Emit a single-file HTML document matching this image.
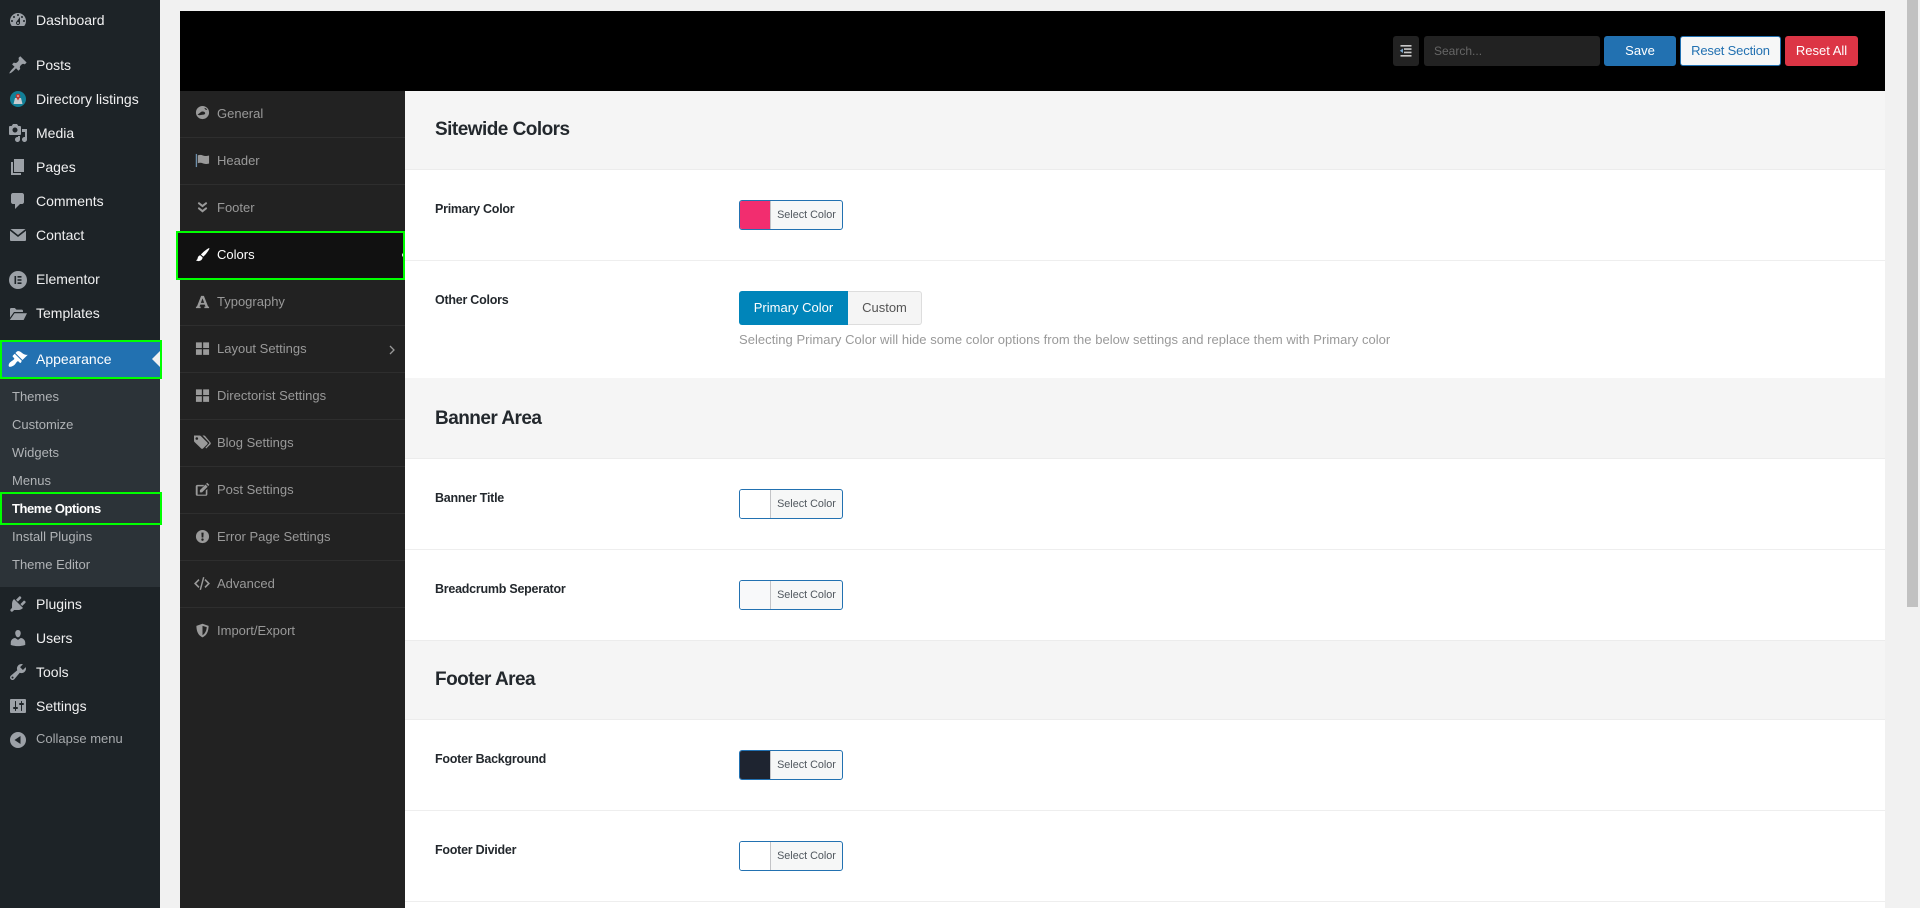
<!DOCTYPE html>
<html lang="en"><head><meta charset="utf-8"><title>Theme Options</title>
<style>
html,body{margin:0;padding:0;width:1920px;height:908px;overflow:hidden;background:#f1f1f1;font-family:"Liberation Sans",sans-serif}
div,span,a,svg{position:absolute;display:block;box-sizing:border-box}
.t{white-space:nowrap}
.m{left:36px;height:20px;line-height:20px;font-size:14px;color:#f0f0f1;white-space:nowrap}
.i{left:8px;width:20px;height:20px;fill:#9ca1a7}
.s{left:12px;height:18px;line-height:18px;font-size:13px;color:#b0b3b6;white-space:nowrap}
.p{left:217px;height:18px;line-height:18px;font-size:13px;color:#999;white-space:nowrap}
.pi{left:195px;width:15px;height:15px;fill:#9a9a9a}
.hr{left:180px;width:225px;height:1px;background:#2e2e2e}
.sec{left:405px;width:1480px;background:#f5f5f5;border-bottom:1px solid #ececec}
.h{left:435px;height:26px;line-height:26px;font-size:19px;font-weight:bold;color:#23282d;white-space:nowrap;letter-spacing:-.53px}
.l{left:435px;height:18px;line-height:18px;font-size:12.5px;font-weight:bold;color:#23282d;white-space:nowrap;letter-spacing:-.25px}
.line{left:405px;width:1480px;height:1px;background:#eee}
.c{left:739px;width:104px;height:30px;border:1px solid #2271b1;border-radius:3px;background:#f6f7f7;overflow:hidden}
.c i{position:absolute;display:block;left:0;top:0;width:30px;height:28px;border-right:1px solid #c3c4c7}
.c b{position:absolute;left:31px;top:0;width:71px;height:28px;line-height:28px;text-align:center;font-size:10.8px;font-weight:normal;color:#50575e;white-space:nowrap}
</style></head><body>

<!-- WP admin sidebar -->
<div style="left:0;top:0;width:160px;height:908px;background:#1d2327"></div>
<div style="left:0;top:378px;width:160px;height:209px;background:#2c3338"></div>
<div style="left:0;top:340px;width:160px;height:38px;background:#2271b1"></div>

<svg class="i" style="top:10px" viewBox="0 0 20 20"><path fill-rule="evenodd" d="M3.76 16h12.48c1.1-1.37 1.76-3.11 1.76-5 0-4.42-3.58-8-8-8s-8 3.58-8 8c0 1.89.66 3.63 1.76 5zM10 4c.55 0 1 .45 1 1s-.45 1-1 1-1-.45-1-1 .45-1 1-1zM6 6c.55 0 1 .45 1 1s-.45 1-1 1-1-.45-1-1 .45-1 1-1zm8 0c.55 0 1 .45 1 1s-.45 1-1 1-1-.45-1-1 .45-1 1-1zm-5.37 5.55L12 7v6c0 1.1-.9 2-2 2s-2-.9-2-2c0-.57.24-1.08.63-1.45zM4 10c.55 0 1 .45 1 1s-.45 1-1 1-1-.45-1-1 .45-1 1-1zm12 0c.55 0 1 .45 1 1s-.45 1-1 1-1-.45-1-1 .45-1 1-1zm-5 3c0-.55-.45-1-1-1s-1 .45-1 1 .45 1 1 1 1-.45 1-1z"/></svg>
<div class="m" style="top:10px">Dashboard</div>

<svg class="i" style="top:55px" viewBox="0 0 20 20"><path d="M10.44 3.02l1.82-1.82 6.36 6.35-1.83 1.82c-1.05-.68-2.48-.57-3.41.36l-.75.75c-.92.93-1.04 2.35-.35 3.41l-1.83 1.82-2.41-2.41-2.8 2.79c-.42.42-3.38 2.71-3.8 2.29s1.86-3.39 2.28-3.81l2.79-2.79L4.1 9.36l1.83-1.82c1.05.69 2.48.57 3.4-.36l.75-.75c.93-.92 1.05-2.35.36-3.41z"/></svg>
<div class="m" style="top:55px">Posts</div>

<svg style="left:10px;top:91px;width:16px;height:16px" viewBox="0 0 16 16"><circle cx="8" cy="8" r="8" fill="#127f97"/><path d="M5 7h6l1.500 6h-9z" fill="#c9ccd0"/><circle cx="8" cy="5" r="2.300" fill="#c5352f"/><path d="M6.300 6.500L8 9.500l1.700-3z" fill="#c5352f"/><circle cx="8" cy="5" r=".8" fill="#eee"/></svg>
<div class="m" style="top:89px">Directory listings</div>

<svg class="i" style="top:123px" viewBox="0 0 20 20"><path fill-rule="evenodd" d="M13 11V4c0-.55-.45-1-1-1h-1.67L9 1H5L3.67 3H2c-.55 0-1 .45-1 1v7c0 .55.45 1 1 1h10c.55 0 1-.45 1-1zM7 4.500c1.38 0 2.500 1.120 2.500 2.500S8.380 9.500 7 9.500 4.500 8.380 4.500 7 5.620 4.500 7 4.500zM14 6h5v10.500c0 1.380-1.120 2.500-2.500 2.500S14 17.880 14 16.500s1.120-2.500 2.500-2.500c.17 0 .34.02.5.05V9h-3V6zm-4 8.050V13h2v3.500c0 1.380-1.120 2.500-2.500 2.500S7 17.880 7 16.500 8.120 14 9.500 14c.17 0 .34.02.5.05z"/></svg>
<div class="m" style="top:123px">Media</div>

<svg class="i" style="top:157px" viewBox="0 0 20 20"><path d="M6 15V2h10v13H6zm-1 1h8v2H3V5h2v11z"/></svg>
<div class="m" style="top:157px">Pages</div>

<svg class="i" style="top:191px" viewBox="0 0 20 20"><path d="M5 2h9c1.100 0 2 .9 2 2v7c0 1.100-.9 2-2 2h-2l-5 5v-5H5c-1.100 0-2-.9-2-2V4c0-1.100.9-2 2-2z"/></svg>
<div class="m" style="top:191px">Comments</div>

<svg class="i" style="top:225px" viewBox="0 0 20 20"><path d="M2.500 4h15L10 10z"/><path d="M2 5.800l8 6.200 8-6.200V15c0 .55-.45 1-1 1H3c-.55 0-1-.45-1-1z"/></svg>
<div class="m" style="top:225px">Contact</div>

<svg class="i" style="top:270px" viewBox="0 0 20 20"><path fill-rule="evenodd" d="M10 1a9 9 0 1 0 0 18a9 9 0 1 0 0-18zM6.500 6h1.600v8H6.500zM9.500 6h4v1.600h-4zM9.500 9.200h4v1.600h-4zM9.500 12.400h4v1.600h-4z"/></svg>
<div class="m" style="top:269px">Elementor</div>

<svg class="i" style="top:304px" viewBox="0 0 20 20"><path d="M2 5.200c0-.7.5-1.200 1.200-1.200h3.600l1.600 1.600h5.400c.7 0 1.200.5 1.200 1.200v1.200H6l-4 5.600zM6.500 9.200H19l-3.400 6.800H1.800z"/></svg>
<div class="m" style="top:303px">Templates</div>

<svg class="i" style="top:349px;fill:#fff" viewBox="0 0 20 20"><path d="M14.480 11.060L7.410 3.990l1.500-1.500c.5-.56 2.300-.47 3.510.32 1.210.8 1.430 1.280 2.910 2.100 1.180.64 2.450 1.260 4.450.85zm-.71.71L6.700 4.700 4.930 6.470c-.39.39-.39 1.020 0 1.410l1.060 1.060c.39.39.39 1.030 0 1.420-.6.6-1.430 1.110-2.210 1.690-.35.26-.7.53-1.010.84C1.430 13.230 0 16.500 1.010 17.500c.99 1 4.260-.43 5.610-1.760.31-.31.58-.66.84-1.010.58-.78 1.090-1.610 1.690-2.210.39-.39 1.020-.39 1.410 0l1.060 1.060c.39.39 1.020.39 1.410 0z"/></svg>
<div class="m" style="top:349px;color:#fff">Appearance</div>
<svg style="left:152px;top:351px;width:8px;height:16px" viewBox="0 0 8 16"><path d="M8 0v16L0 8z" fill="#f1f1f1"/></svg>
<div style="left:0;top:340px;width:162px;height:39px;border:2px solid #0f0"></div>

<div class="s" style="top:388px">Themes</div>
<div class="s" style="top:416px">Customize</div>
<div class="s" style="top:444px">Widgets</div>
<div class="s" style="top:472px">Menus</div>
<div class="s" style="top:500px;color:#fff;font-weight:bold;letter-spacing:-.45px">Theme Options</div>
<div style="left:0;top:492px;width:162px;height:33px;border:2px solid #0f0"></div>
<div class="s" style="top:528px">Install Plugins</div>
<div class="s" style="top:556px">Theme Editor</div>

<svg class="i" style="top:594px" viewBox="0 0 20 20"><path d="M13.110 4.360L9.870 7.600 8 5.730l3.240-3.240c.35-.34 1.050-.2 1.560.32.52.51.66 1.210.31 1.550zm-8 1.770l.91-1.120 9.010 9.010-1.190.84c-.71.71-2.630 1.160-3.820 1.160H6.140L4.900 17.260c-.59.59-1.540.59-2.120 0-.59-.58-.59-1.530 0-2.120l1.240-1.240v-3.880c0-1.130.4-3.190 1.090-3.890zm7.260 3.970l3.240-3.240c.34-.35 1.040-.21 1.550.31.52.51.66 1.210.31 1.550l-3.240 3.250z"/></svg>
<div class="m" style="top:594px">Plugins</div>

<svg class="i" style="top:628px" viewBox="0 0 20 20"><path d="M10 9.250c-2.270 0-2.730-3.440-2.730-3.440C7 4.020 7.820 2 9.970 2c2.160 0 2.980 2.020 2.710 3.810 0 0-.41 3.440-2.680 3.440zm0 2.570L12.720 10c2.390 0 4.520 2.330 4.520 4.530v2.490s-3.650 1.130-7.240 1.130c-3.650 0-7.240-1.130-7.240-1.130v-2.490c0-2.250 1.940-4.480 4.470-4.480z"/></svg>
<div class="m" style="top:628px">Users</div>

<svg class="i" style="top:662px" viewBox="0 0 20 20"><path fill-rule="evenodd" d="M16.680 9.770c-1.340 1.340-3.300 1.670-4.950.99l-5.410 6.520c-.99.99-2.590.99-3.580 0s-.99-2.590 0-3.570l6.520-5.420c-.68-1.650-.35-3.610.99-4.950 1.280-1.280 3.120-1.620 4.720-1.060l-2.890 2.890 2.820 2.820 2.860-2.870c.53 1.580.18 3.390-1.080 4.650zM3.810 16.210c.4.39 1.040.39 1.430 0 .4-.4.4-1.040 0-1.430-.39-.4-1.030-.4-1.430 0-.39.39-.39 1.030 0 1.430z"/></svg>
<div class="m" style="top:662px">Tools</div>

<svg class="i" style="top:696px" viewBox="0 0 20 20"><path fill-rule="evenodd" d="M18 16V4c0-.55-.45-1-1-1H3c-.55 0-1 .45-1 1v12c0 .55.45 1 1 1h14c.55 0 1-.45 1-1zM8 11h1c.55 0 1 .45 1 1s-.45 1-1 1H8v1.500c0 .28-.22.5-.5.5s-.5-.22-.5-.5V13H6c-.55 0-1-.45-1-1s.45-1 1-1h1V5.500c0-.28.22-.5.5-.5s.5.22.5.5V11zm5-2h-1c-.55 0-1-.45-1-1s.45-1 1-1h1V5.500c0-.28.22-.5.5-.5s.5.22.5.5V7h1c.55 0 1 .45 1 1s-.45 1-1 1h-1v5.500c0 .28-.22.5-.5.5s-.5-.22-.5-.5V9z"/></svg>
<div class="m" style="top:696px">Settings</div>

<svg class="i" style="top:730px" viewBox="0 0 20 20"><path fill-rule="evenodd" d="M10 2a8 8 0 1 0 0 16a8 8 0 1 0 0-16zM12.500 6v8L6.500 10z"/></svg>
<div class="m" style="top:729px;font-size:13px;color:#a7aaad">Collapse menu</div>

<!-- Panel header -->
<div style="left:180px;top:11px;width:1705px;height:80px;background:#000"></div>
<div style="left:1393px;top:36px;width:26px;height:30px;background:#222;border-radius:3px"></div>
<svg style="left:1399px;top:44px;width:14px;height:14px" viewBox="0 0 14 14"><path d="M1.500 1h11v1.600h-11zM5 4.300h7.500v1.600H5zM5 7.600h7.500v1.600H5zM1.500 11h11v1.600h-11z" fill="#c8c8c8"/><path d="M4 4.500v4.500L.8 6.800z" fill="#7ba5c9"/></svg>
<div style="left:1424px;top:36px;width:176px;height:30px;background:#222;border-radius:3px"></div>
<div class="t" style="left:1434px;top:36px;height:30px;line-height:30px;font-size:12px;color:#666">Search...</div>
<div class="t" style="left:1604px;top:36px;width:72px;height:30px;line-height:30px;background:#2271b1;border-radius:3px;color:#fff;font-size:13px;text-align:center">Save</div>
<div class="t" style="left:1680px;top:36px;width:101px;height:30px;line-height:27px;background:#f6f7f7;border:1px solid #2271b1;border-radius:3px;color:#2271b1;font-size:13px;text-align:center;letter-spacing:-.17px">Reset Section</div>
<div class="t" style="left:1785px;top:36px;width:73px;height:30px;line-height:30px;background:#dc3545;border-radius:3px;color:#fff;font-size:13px;text-align:center">Reset All</div>

<!-- Panel nav -->
<div style="left:180px;top:91px;width:225px;height:817px;background:#222"></div>
<div class="hr" style="top:137px"></div><div class="hr" style="top:184px"></div><div class="hr" style="top:231px"></div><div class="hr" style="top:278px"></div><div class="hr" style="top:325px"></div><div class="hr" style="top:372px"></div><div class="hr" style="top:419px"></div><div class="hr" style="top:466px"></div><div class="hr" style="top:513px"></div><div class="hr" style="top:560px"></div><div class="hr" style="top:607px"></div>

<svg class="pi" style="top:105px" viewBox="0 0 16 16"><path fill-rule="evenodd" d="M8 1a7 7 0 1 0 0 14A7 7 0 1 0 8 1zM2.800 10c1.700-.6 2.800-2.200 4.200-2.900 1.500-.5 3.500 0 3.800 1.400.3 1.300-1.600 2-3 1.900-1.300 0-3.700 1.300-5-.4zM10 3c1 0 2.500.8 3 2-1 .5-2.500 0-3-2z"/></svg>
<div class="p" style="top:105px">General</div>

<svg class="pi" style="top:153px" viewBox="0 0 16 16"><path fill="#6d8fab" d="M.8 1h1.400v14H.8z"/><path d="M3 2.500c2-.8 3.800-.5 5.500.2s3.500.7 6.500 0v8.500c-3 .8-4.700.6-6.500-.1s-3.500-.9-5.500-.2z"/></svg>
<div class="p" style="top:152px">Header</div>

<svg class="pi" style="top:200px" viewBox="0 0 16 16"><path d="M4 2l4 3 4-3 1 1.800-5 4-5-4zM4 7.500l4 3 4-3 1 1.800-5 4-5-4z"/></svg>
<div class="p" style="top:199px">Footer</div>

<div style="left:178px;top:233px;width:227px;height:47px;background:#111"></div>
<svg class="pi" style="top:247px;fill:#fff" viewBox="0 0 16 16"><path d="M15 1c.5.3.4 1-.1 1.800C13 6 10.500 9 8.800 10.300L6.300 8C8 6 11.800 2.600 15 1zM5.500 8.800l2.600 2.300c0 2.500-2.300 3.900-4.300 3.900-1.200 0-2.300-.4-2.800-1 1.300-.2 1.600-1 1.800-2 .3-1.600 1.300-3 2.700-3.200z"/></svg>
<div class="p" style="top:246px;color:#fff">Colors</div>
<div style="left:402px;top:253px;width:3px;height:4px;background:#eee;border-radius:2px 0 0 2px"></div>
<div style="left:176px;top:231px;width:229px;height:49px;border:2px solid #0f0"></div>

<svg class="pi" style="top:294px" viewBox="0 0 16 16"><path fill-rule="evenodd" d="M6.500 2h3L14 13.500h1V15h-5v-1.500h1.200l-.8-2.200H5.600l-.8 2.200H6V15H1v-1.500h1zM8 4.700L6.200 9.500h3.600z"/></svg>
<div class="p" style="top:293px">Typography</div>

<svg class="pi" style="top:341px" viewBox="0 0 16 16"><path d="M1 1.500h6.300v6H1zM8.700 1.500H15v6H8.700zM1 8.800h6.300v6H1zM8.700 8.800H15v6H8.700z"/></svg>
<div class="p" style="top:340px">Layout Settings</div>
<svg style="left:388px;top:345px;width:8px;height:10px" viewBox="0 0 8 10"><path d="M2 1l4 4-4 4" fill="none" stroke="#999" stroke-width="1.300"/></svg>

<svg class="pi" style="top:388px" viewBox="0 0 16 16"><path d="M1 1.500h6.300v6H1zM8.700 1.500H15v6H8.700zM1 8.800h6.300v6H1zM8.700 8.800H15v6H8.700z"/></svg>
<div class="p" style="top:387px">Directorist Settings</div>

<svg style="left:193px;top:434px;width:18px;height:16px;fill:#9a9a9a" viewBox="0 0 18 16"><path fill-rule="evenodd" d="M1 1.500h5.500c.5 0 1 .2 1.300.5l6.500 6.500c.5.500.5 1.300 0 1.800l-4.300 4.200c-.5.500-1.300.5-1.800 0L1.500 8C1.200 7.700 1 7.200 1 6.700zM3.800 3.200a1.300 1.300 0 1 0 0 2.600 1.300 1.300 0 1 0 0-2.600z"/><path d="M9.500 1.500h1.300c.5 0 1 .2 1.300.5l5.400 6.500c.4.500.4 1.300 0 1.800l-4.300 4.200-.8-.8 3.800-4.200c.3-.4.3-.7 0-1z"/></svg>
<div class="p" style="top:434px">Blog Settings</div>

<svg class="pi" style="top:482px" viewBox="0 0 16 16"><path fill-rule="evenodd" d="M2.500 3h7.500L8.500 4.700H2.800v8.800h8.700V9l1.700-1.700v5.700c0 1-.7 1.700-1.700 1.700H2.500C1.500 14.700.8 14 .8 13V4.700C.8 3.700 1.500 3 2.500 3z"/><path d="M13 .8l2.300 2.300-1.200 1.200-2.300-2.300zM11.200 2.700l2.300 2.300-6 6H5.200V8.700z"/></svg>
<div class="p" style="top:481px">Post Settings</div>

<svg class="pi" style="top:529px" viewBox="0 0 16 16"><path fill-rule="evenodd" d="M8 1a7 7 0 1 0 0 14A7 7 0 1 0 8 1zM6.800 3.800h2.400l-.3 5.200H7.100zM8 10a1.300 1.300 0 1 1 0 2.600A1.300 1.300 0 1 1 8 10z"/></svg>
<div class="p" style="top:528px">Error Page Settings</div>

<svg style="left:193px;top:576px;width:18px;height:15px;fill:#9a9a9a" viewBox="0 0 18 15"><path d="M5.500 3L1 7.500 5.500 12l1-1.200-3.200-3.300 3.200-3.300zM12.500 3L17 7.500 12.500 12l-1-1.200 3.200-3.300-3.200-3.300zM10 1l1.400.4L8 14l-1.400-.4z"/></svg>
<div class="p" style="top:575px">Advanced</div>

<svg class="pi" style="top:623px" viewBox="0 0 16 16"><path fill-rule="evenodd" d="M8 .8L14.500 3c0 5-1.500 10-6.500 12.300C3 13 1.500 8 1.500 3zM8 3v10c3-1.800 4.300-5 4.500-8.600z"/></svg>
<div class="p" style="top:622px">Import/Export</div>

<!-- Content -->
<div style="left:405px;top:91px;width:1480px;height:817px;background:#fff"></div>

<div class="sec" style="top:91px;height:79px"></div>
<div class="h" style="top:117px">Sitewide Colors</div>

<div class="l" style="top:200px">Primary Color</div>
<div class="c" style="top:200px"><i style="background:#f22d6f"></i><b>Select Color</b></div>
<div class="line" style="top:260px"></div>

<div class="l" style="top:291px">Other Colors</div>
<div class="t" style="left:739px;top:291px;width:109px;height:34px;line-height:33px;background:#0085ba;border-radius:3px 0 0 3px;color:#fff;font-size:13px;text-align:center">Primary Color</div>
<div class="t" style="left:848px;top:291px;width:74px;height:34px;line-height:32px;background:#f5f5f5;border:1px solid #ddd;border-left:0;border-radius:0 3px 3px 0;color:#555;font-size:13px;text-align:center">Custom</div>
<div class="t" style="left:739px;top:331px;height:18px;line-height:18px;font-size:13px;color:#999;letter-spacing:.035px">Selecting Primary Color will hide some color options from the below settings and replace them with Primary color</div>
<div class="line" style="top:378px"></div>

<div class="sec" style="top:378px;height:81px"></div>
<div class="h" style="top:406px">Banner Area</div>

<div class="l" style="top:489px">Banner Title</div>
<div class="c" style="top:489px"><i style="background:#fff"></i><b>Select Color</b></div>
<div class="line" style="top:549px"></div>

<div class="l" style="top:580px">Breadcrumb Seperator</div>
<div class="c" style="top:580px"><i style="background:#f8f9fa"></i><b>Select Color</b></div>

<div class="sec" style="top:640px;height:80px;border-top:1px solid #ececec"></div>
<div class="h" style="top:667px">Footer Area</div>

<div class="l" style="top:750px">Footer Background</div>
<div class="c" style="top:750px"><i style="background:#1e2430"></i><b>Select Color</b></div>
<div class="line" style="top:810px"></div>

<div class="l" style="top:841px">Footer Divider</div>
<div class="c" style="top:841px"><i style="background:#fff"></i><b>Select Color</b></div>
<div class="line" style="top:901px"></div>

<!-- Scrollbar -->
<div style="left:1905px;top:0;width:15px;height:908px;background:#f1f1f1"></div>
<div style="left:1907px;top:0;width:11px;height:607px;background:#c1c1c1"></div>
</body></html>
